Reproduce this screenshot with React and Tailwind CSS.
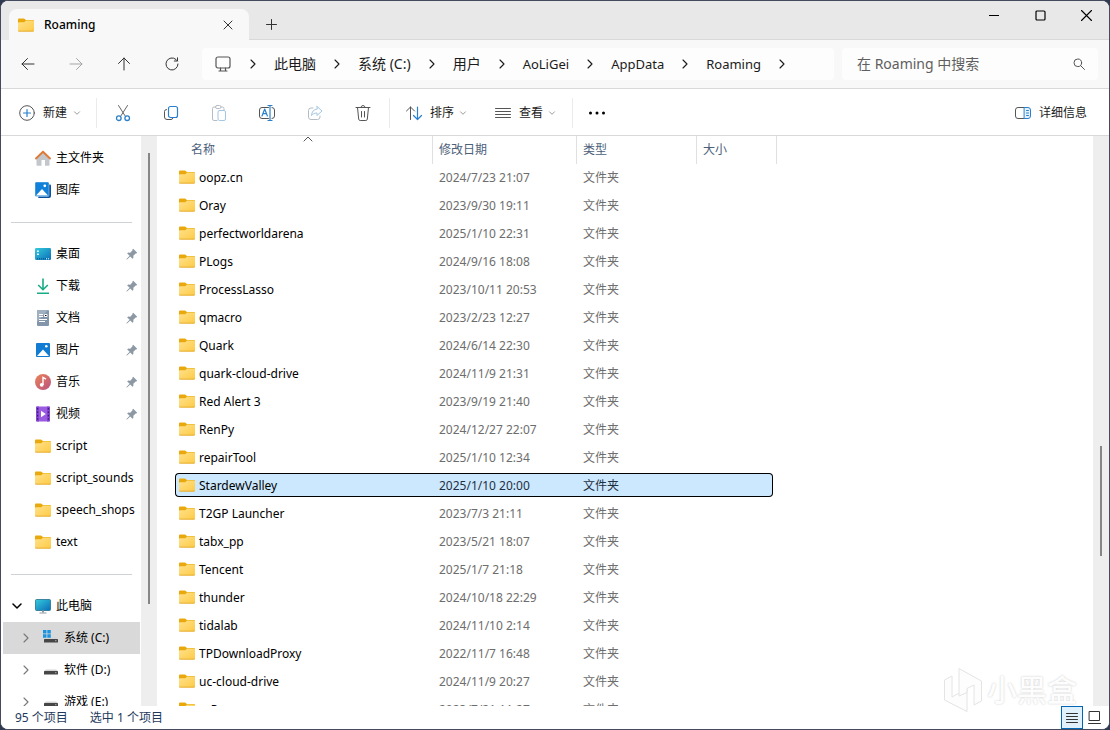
import { useState } from 'react'

const CRUMBS = [
  { label: '此电脑' },
  { label: '系统 (C:)' },
  { label: '用户' },
  { label: 'AoLiGei', latin: true },
  { label: 'AppData', latin: true },
  { label: 'Roaming', latin: true },
]

const FILES = [
  ['oopz.cn', '2024/7/23 21:07'],
  ['Oray', '2023/9/30 19:11'],
  ['perfectworldarena', '2025/1/10 22:31'],
  ['PLogs', '2024/9/16 18:08'],
  ['ProcessLasso', '2023/10/11 20:53'],
  ['qmacro', '2023/2/23 12:27'],
  ['Quark', '2024/6/14 22:30'],
  ['quark-cloud-drive', '2024/11/9 21:31'],
  ['Red Alert 3', '2023/9/19 21:40'],
  ['RenPy', '2024/12/27 22:07'],
  ['repairTool', '2025/1/10 12:34'],
  ['StardewValley', '2025/1/10 20:00'],
  ['T2GP Launcher', '2023/7/3 21:11'],
  ['tabx_pp', '2023/5/21 18:07'],
  ['Tencent', '2025/1/7 21:18'],
  ['thunder', '2024/10/18 22:29'],
  ['tidalab', '2024/11/10 2:14'],
  ['TPDownloadProxy', '2022/11/7 16:48'],
  ['uc-cloud-drive', '2024/11/9 20:27'],
  ['vsP', '2023/7/21 11:27'],
]

const PINNED = [
  { label: '桌面', icon: DesktopIcon },
  { label: '下载', icon: DownloadIcon },
  { label: '文档', icon: DocumentIcon },
  { label: '图片', icon: PicturesIcon },
  { label: '音乐', icon: MusicIcon },
  { label: '视频', icon: VideoIcon },
]

const FOLDERS = ['script', 'script_sounds', 'speech_shops', 'text']

const DRIVES = [
  { label: '系统 (C:)', system: true, active: true },
  { label: '软件 (D:)' },
  { label: '游戏 (E:)' },
]

// line icons

function Line({ size = 16, color = 'currentColor', width = 1, className = '', children }) {
  return (
    <svg
      width={size}
      height={size}
      viewBox={`0 0 ${size} ${size}`}
      fill="none"
      stroke={color}
      strokeWidth={width}
      strokeLinecap="round"
      strokeLinejoin="round"
      className={`shrink-0 ${className}`}
      aria-hidden="true"
    >
      {children}
    </svg>
  )
}

function ChevronRight({ className }) {
  return (
    <Line size={10} width={1.1} className={className}>
      <path d="M3 1l4 4-4 4" />
    </Line>
  )
}

function ChevronDown() {
  return (
    <Line size={8} color="#9a9a9a">
      <path d="M1.5 2.8L4 5.3l2.5-2.5" />
    </Line>
  )
}

function CutIcon() {
  return (
    <Line size={18}>
      <path d="M4.5 1.5l7 11M13.5 1.5l-7 11" stroke="#666" />
      <circle cx="4.8" cy="14.2" r="2.3" stroke="#2a80cc" strokeWidth="1.3" />
      <circle cx="13.2" cy="14.2" r="2.3" stroke="#2a80cc" strokeWidth="1.3" />
    </Line>
  )
}

function CopyIcon() {
  return (
    <Line>
      <path d="M3.5 4.5A2 2 0 0 0 1.500 6.500V12A2.500 2.500 0 0 0 4 14.500h4a2 2 0 0 0 2-1.500" stroke="#555" />
      <rect x="5.500" y="1.500" width="9" height="11" rx="2" stroke="#2a80cc" strokeWidth="1.200" />
    </Line>
  )
}

function PasteIcon() {
  return (
    <Line size={18}>
      <path d="M5.500 3H4a1.500 1.500 0 0 0-1.500 1.500v10.500A1.500 1.500 0 0 0 4 16.500h3M11 3h1.500A1.500 1.500 0 0 1 14 4.500V6" stroke="#b5bcc4" />
      <rect x="5.500" y="1.500" width="5.500" height="3" rx="1.500" stroke="#b5bcc4" />
      <rect x="8" y="6.500" width="7.500" height="10" rx="1.500" stroke="#a3c6e3" />
    </Line>
  )
}

function RenameIcon() {
  return (
    <Line size={18}>
      <path d="M10.500 3.500H4A2.500 2.500 0 0 0 1.500 6v6A2.500 2.500 0 0 0 4 14.500h6.500M14 3.500A2.500 2.500 0 0 1 16.500 6v6a2.500 2.500 0 0 1-2.500 2.500" stroke="#555" />
      <path d="M10 1.500h4M12 1.500v15M10 16.500h4M4 12l2.700-7 2.700 7M5 9.700h3.400" stroke="#2a80cc" strokeWidth="1.200" />
    </Line>
  )
}

function ShareIcon() {
  return (
    <Line>
      <path d="M6 3H4a2.500 2.500 0 0 0-2.500 2.500v6.500A2.500 2.500 0 0 0 4 14.500h6.500A2.500 2.500 0 0 0 13 12v-1" stroke="#b5bcc4" />
      <path d="M10 1.500l5 4.500-5 4.500V8c-2.500 0-4.300.8-5.500 2.600C4.800 6.800 6.600 4.300 10 4z" stroke="#a3c6e3" />
    </Line>
  )
}

function TrashIcon() {
  return (
    <Line size={18} color="#555">
      <path d="M2 3.500h14M7 3.500a2 2 0 0 1 4 0M3.500 3.500l1.200 11.700A1.500 1.500 0 0 0 6.200 16.500h5.600a1.500 1.500 0 0 0 1.500-1.300L14.500 3.500M7.500 7.500v5.500M10.500 7.500v5.500" />
    </Line>
  )
}

function SortIcon() {
  return (
    <Line size={18}>
      <path d="M5.500 15.500V3M1.500 7l4-4 4 4" stroke="#555" />
      <path d="M12.500 3v12.500M8.500 11.500l4 4 4-4" stroke="#2a80cc" strokeWidth="1.200" />
    </Line>
  )
}

function LinesIcon() {
  return (
    <Line color="#555">
      <path d="M.5 3.500h15M.5 6.500h15M.5 9.500h15M.5 12.500h15" />
    </Line>
  )
}

function DetailsPaneIcon() {
  return (
    <Line>
      <path d="M9.500 2.500H3A2.500 2.500 0 0 0 .5 5v6A2.500 2.500 0 0 0 3 13.500h6.500" stroke="#555" />
      <path d="M9.500 2.500H13A2.500 2.500 0 0 1 15.500 5v6a2.500 2.500 0 0 1-2.500 2.500H9.500z" fill="#e3f2fc" stroke="#2a80cc" />
      <path d="M11.500 5.500h2M11.500 8h2M11.500 10.500h2" stroke="#2a80cc" />
    </Line>
  )
}

// coloured icons

function FolderIcon() {
  return (
    <svg width="16" height="14" viewBox="0 0 16 14" className="shrink-0" aria-hidden="true">
      <defs>
        <linearGradient id="folder" x1="0" y1="0" x2="1" y2="1">
          <stop offset="0" stopColor="#ffe28c" />
          <stop offset="1" stopColor="#fdca45" />
        </linearGradient>
      </defs>
      <path d="M0 1.500A1 1 0 0 1 1 .5h5l2 1.500h7a1 1 0 0 1 1 1V6H0z" fill="#e9a90c" />
      <path d="M0 5.200a1 1 0 0 1 1-1h5.300L8 2.500h7.200a.8.800 0 0 1 .8.800v9.300a1 1 0 0 1-1 1H1a1 1 0 0 1-1-1z" fill="url(#folder)" />
      <path d="M0 12.200v.4a1 1 0 0 0 1 1h14a1 1 0 0 0 1-1v-.4a1 1 0 0 1-1 .6H1a1 1 0 0 1-1-.6z" fill="#dd9f1c" />
    </svg>
  )
}

function HomeIcon() {
  return (
    <svg width="16" height="16" viewBox="0 0 16 16" aria-hidden="true">
      <path d="M1.500 7.500L8 2l6.500 5.500V15a.8.800 0 0 1-.8.800H10V10H6.500v5.800H2.300a.8.800 0 0 1-.8-.8z" fill="#c3c6ca" />
      <path d="M1 8.500l7-6.800 7 6.800" fill="none" stroke="#df7a36" strokeWidth="1.900" strokeLinecap="round" strokeLinejoin="round" />
    </svg>
  )
}

function GalleryIcon() {
  return (
    <svg width="16" height="16" viewBox="0 0 16 16" aria-hidden="true">
      <path d="M14 2.500h1a1 1 0 0 1 1 1V14a2 2 0 0 1-2 2H4a1 1 0 0 1-1-1z" fill="#0b4f9e" />
      <rect width="14" height="14.500" rx="1.200" fill="#1180d8" stroke="#fff" strokeWidth=".4" />
      <path d="M1 13.500l6-6.500 6 6.500z" fill="#fff" />
      <circle cx="9.800" cy="3.800" r="1.400" fill="#fff" />
    </svg>
  )
}

function DesktopIcon() {
  return (
    <svg width="16" height="12" viewBox="0 0 16 12" aria-hidden="true">
      <defs>
        <linearGradient id="desk" x1="0" y1="0" x2="1" y2="1">
          <stop offset="0" stopColor="#35cbdc" />
          <stop offset="1" stopColor="#0a6db8" />
        </linearGradient>
      </defs>
      <rect width="16" height="12" rx="1.200" fill="url(#desk)" />
      <path d="M2 2.500h1.800v1.500H2zM2 5.500h1.800v1.500H2z" fill="#fff" />
      <path d="M2 10.800h9" stroke="#064a7c" strokeDasharray="1 1" />
      <path d="M11 10.800h4" stroke="#fff" strokeDasharray="1 1" />
    </svg>
  )
}

function DownloadIcon() {
  return (
    <svg width="16" height="16" viewBox="0 0 16 16" fill="none" stroke="#19ab85" strokeWidth="1.600" aria-hidden="true">
      <path d="M8 .5v11M3.200 7L8 11.700 12.800 7M2 15.200h12" />
    </svg>
  )
}

function DocumentIcon() {
  return (
    <svg width="16" height="16" viewBox="0 0 16 16" aria-hidden="true">
      <rect x="2" width="12" height="16" rx="1" fill="#8295aa" />
      <path d="M2 1a1 1 0 0 1 1-1h10L2 12z" fill="#9fb0c0" />
      <path d="M4 4.500h4M4 6.500h4M4 9.500h8M4 11.500h6M9.500 4.500H12v2H9.500z" stroke="#fff" />
    </svg>
  )
}

function PicturesIcon() {
  return (
    <svg width="16" height="16" viewBox="0 0 16 16" aria-hidden="true">
      <rect x="1" y="1" width="14" height="14" rx="1" fill="#127cd2" />
      <path d="M2 14l6-6.500 6 6.500z" fill="#fff" />
      <circle cx="11.300" cy="4.300" r="1.300" fill="#fff" />
    </svg>
  )
}

function MusicIcon() {
  return (
    <svg width="16" height="16" viewBox="0 0 16 16" aria-hidden="true">
      <defs>
        <linearGradient id="music" x1="0" y1="0" x2="1" y2="1">
          <stop offset="0" stopColor="#eb8458" />
          <stop offset="1" stopColor="#b95080" />
        </linearGradient>
      </defs>
      <circle cx="8" cy="8" r="8" fill="url(#music)" />
      <circle cx="6.700" cy="10.800" r="1.900" fill="#fff" />
      <path d="M8 11V3.500l3 1.700" fill="none" stroke="#fff" strokeWidth="1.400" />
    </svg>
  )
}

function VideoIcon() {
  return (
    <svg width="16" height="16" viewBox="0 0 16 16" aria-hidden="true">
      <rect x="1" y=".5" width="14" height="15" rx="1" fill="#9a5be0" />
      <path d="M1 1.500a1 1 0 0 1 1-1h2v15H2a1 1 0 0 1-1-1zM12 .5h2a1 1 0 0 1 1 1v13a1 1 0 0 1-1 1h-2z" fill="#8246cc" />
      <path d="M2.600 2v12M13.400 2v12" stroke="#3e1677" strokeWidth="1.200" strokeDasharray="1.600 1.800" />
      <path d="M6 4.800v6.400L10.800 8z" fill="#fff" />
    </svg>
  )
}

function ComputerIcon() {
  return (
    <svg width="16" height="16" viewBox="0 0 16 16" aria-hidden="true">
      <rect x=".5" y="1.500" width="15" height="11" rx="1" fill="url(#desk)" stroke="#24708f" strokeWidth=".8" />
      <path d="M7 12.500h2v2H7z" fill="#8f9aa3" />
      <path d="M4.500 15h7" stroke="#8f9aa3" />
    </svg>
  )
}

function DriveIcon({ system }) {
  return (
    <svg width="16" height="16" viewBox="0 0 16 16" aria-hidden="true">
      <path d="M3 7.500h10L15 9H1z" fill="#d3d5d7" />
      <rect x="1" y="9" width="14" height="3.500" rx=".6" fill="#464646" />
      <path d="M12 10.700h1.500" stroke="#b8c6b8" strokeWidth=".8" />
      {system && (
        <>
          <path d="M0 0h8v8H0z" fill="#d9d9d9" />
          <path d="M0 0h3.500v3.500H0zM4.300 0h3.500v3.500H4.300zM0 4.300h3.500v3.500H0zM4.300 4.300h3.500v3.500H4.300z" fill="#1b94e0" />
        </>
      )}
    </svg>
  )
}

function PinIcon() {
  return (
    <svg width="12" height="12" viewBox="0 0 12 12" fill="#8c98a4" className="shrink-0" aria-hidden="true">
      <path d="M7.200.8l4 4-.9.8-.6-.2-2.400 2.400.1 2.100-.9.9L4.200 8.400 1 11.500l-.6.1.1-.6 3.100-3.200L1.200 5.500l.9-.9 2.100.1 2.400-2.400-.2-.7z" />
    </svg>
  )
}

function WatermarkLogo() {
  return (
    <svg width="40" height="46" viewBox="0 0 40 46" fill="#fdfdfd" stroke="#e4e4e4" strokeLinejoin="round" aria-hidden="true">
      <path d="M1.500 13L9 9v21l9-5v-5l6-3v27.500L1.500 33z" />
      <path d="M16 1.500L38.500 14v20L31 38V18l-7 3.500v4l-8 3.500z" />
    </svg>
  )
}

// layout parts

function TitleBar() {
  return (
    <header className="flex h-[39px] shrink-0 bg-[#e8e8e8] pl-2">
      <div className="mt-2 flex w-60 items-center rounded-t-lg bg-[#f8f8f8] pl-[9px] pr-[9px]">
        <FolderIcon />
        <span className="ml-2.5 flex-1 text-xs font-medium text-black">Roaming</span>
        <button type="button" aria-label="关闭标签页" className="flex h-6 w-6 items-center justify-center">
          <Line size={10} color="#333">
            <path d="M1 1l8 8M9 1L1 9" />
          </Line>
        </button>
      </div>
      <button type="button" aria-label="新标签页" className="mt-2 flex w-11 items-center justify-center border-b border-[#d9d9d9]">
        <Line size={11} color="#333">
          <path d="M5.500 .5v10M.5 5.500h10" />
        </Line>
      </button>
      <div className="flex flex-1 items-start justify-end border-b border-[#d9d9d9] text-black">
        <button type="button" aria-label="最小化" className="flex h-7 w-[46px] items-center justify-center">
          <Line size={10}>
            <path d="M0 5.500h10" />
          </Line>
        </button>
        <button type="button" aria-label="最大化" className="flex h-7 w-[46px] items-center justify-center">
          <Line size={11} width={1.2}>
            <rect x="1" y="1" width="9" height="9" rx="1" />
          </Line>
        </button>
        <button type="button" aria-label="关闭" className="flex h-7 w-[46px] items-center justify-center">
          <Line size={11} width={1.1}>
            <path d="M.5 .5l10 10M10.500 .5l-10 10" />
          </Line>
        </button>
      </div>
    </header>
  )
}

function NavButton({ label, disabled, children }) {
  return (
    <button type="button" aria-label={label} disabled={disabled} className="flex w-12 items-center justify-center text-[#333] disabled:text-[#a5a5a5]">
      <Line size={14}>{children}</Line>
    </button>
  )
}

function AddressRow() {
  return (
    <div className="flex h-[49px] shrink-0 items-center border-b border-[#d9d9d9] bg-[#f8f8f8] pl-[3px] pr-[11px]">
      <div className="flex h-8 shrink-0">
        <NavButton label="后退">
          <path d="M13 7H1M6.500 1.500L1 7l5.500 5.500" />
        </NavButton>
        <NavButton label="前进" disabled>
          <path d="M1 7h12M7.500 1.500L13 7l-5.500 5.500" />
        </NavButton>
        <NavButton label="向上">
          <path d="M7 13V1M1.500 6.500L7 1l5.500 5.500" />
        </NavButton>
        <NavButton label="刷新">
          <path d="M13 7a6 6 0 1 1-2-4.500L12.500 4M12.500 .8V4H9.300" />
        </NavButton>
      </div>
      <nav aria-label="路径" className="ml-1.5 flex h-8 min-w-0 flex-1 items-center rounded bg-[#fdfdfd] pl-3 text-sm text-[#1b1b1b]">
        <Line size={18} color="#555" width={1.2}>
          <rect x="2" y="2" width="14" height="11" rx="2" />
          <path d="M6.500 13v2.500M11.500 13v2.500M5 16h8" />
        </Line>
        <ChevronRight className="mx-4" />
        {CRUMBS.map((crumb) => (
          <span key={crumb.label} className="flex shrink-0 items-center">
            <a href="#" className={`whitespace-nowrap ${crumb.latin ? 'text-[13px]' : ''}`}>{crumb.label}</a>
            <ChevronRight className="mx-4" />
          </span>
        ))}
      </nav>
      <div className="ml-2 flex h-8 w-64 shrink-0 items-center rounded bg-[#fdfdfd] pl-[15px] pr-[13px]">
        <input
          type="search"
          aria-label="在 Roaming 中搜索"
          placeholder="在 Roaming 中搜索"
          className="min-w-0 flex-1 bg-transparent text-sm outline-none placeholder:text-[#5f5f5f]"
        />
        <Line size={12} color="#555">
          <circle cx="4.800" cy="4.800" r="3.800" />
          <path d="M7.700 7.700l3.800 3.800" />
        </Line>
      </div>
    </div>
  )
}

function ToolButton({ label, disabled, children }) {
  return (
    <button type="button" aria-label={label} disabled={disabled} className="flex h-8 w-12 items-center justify-center">
      {children}
    </button>
  )
}

function Divider() {
  return <span className="h-[30px] w-px bg-[#ebebeb]" />
}

function Toolbar() {
  return (
    <div className="flex h-[47px] shrink-0 items-center border-b border-[#d9d9d9] bg-white pr-[22px] pt-0.5 text-xs text-[#1b1b1b]">
      <button type="button" className="flex h-8 items-center pl-[18px] pr-[15px]">
        <Line size={16}>
          <circle cx="8" cy="8" r="7.300" stroke="#555" />
          <path d="M8 4.500v7M4.500 8h7" stroke="#2a80cc" strokeWidth="1.200" />
        </Line>
        <span className="ml-2 mr-1.5">新建</span>
        <ChevronDown />
      </button>
      <Divider />
      <span className="w-0.5" />
      <ToolButton label="剪切"><CutIcon /></ToolButton>
      <ToolButton label="复制"><CopyIcon /></ToolButton>
      <ToolButton label="粘贴" disabled><PasteIcon /></ToolButton>
      <ToolButton label="重命名"><RenameIcon /></ToolButton>
      <ToolButton label="共享" disabled><ShareIcon /></ToolButton>
      <ToolButton label="删除"><TrashIcon /></ToolButton>
      <span className="w-0.5" />
      <Divider />
      <button type="button" className="flex h-8 items-center pl-[15px] pr-[15px]">
        <SortIcon />
        <span className="ml-[7px] mr-[5px]">排序</span>
        <ChevronDown />
      </button>
      <button type="button" className="flex h-8 items-center pl-[13px] pr-4">
        <LinesIcon />
        <span className="ml-2 mr-[5px]">查看</span>
        <ChevronDown />
      </button>
      <Divider />
      <ToolButton label="更多">
        <svg width="18" height="4" viewBox="0 0 18 4" aria-hidden="true">
          <circle cx="2.500" cy="2" r="1.500" />
          <circle cx="9" cy="2" r="1.500" />
          <circle cx="15.500" cy="2" r="1.500" />
        </svg>
      </ToolButton>
      <button type="button" className="ml-auto flex h-8 items-center gap-2">
        <DetailsPaneIcon />
        详细信息
      </button>
    </div>
  )
}

function SideLink({ icon, label, pinned }) {
  return (
    <a href="#" className="flex h-8 items-center pl-[34px] pr-[3px]">
      <span className="flex w-4 shrink-0 justify-center">{icon}</span>
      <span className="ml-[5px] flex-1 whitespace-nowrap">{label}</span>
      {pinned && <PinIcon />}
    </a>
  )
}

function SideRule() {
  return (
    <div className="flex h-8 items-center pl-2.5 pr-[9px]">
      <hr className="w-full border-[#cfd2d4]" />
    </div>
  )
}

function Sidebar() {
  return (
    <aside className="flex w-[156px] shrink-0">
      <nav aria-label="导航窗格" className="min-w-0 flex-1 overflow-hidden pt-1.5 text-xs text-black">
        <SideLink icon={<HomeIcon />} label="主文件夹" />
        <SideLink icon={<GalleryIcon />} label="图库" />
        <SideRule />
        {PINNED.map(({ label, icon: Icon }) => (
          <SideLink key={label} icon={<Icon />} label={label} pinned />
        ))}
        {FOLDERS.map((name) => (
          <SideLink key={name} icon={<FolderIcon />} label={name} />
        ))}
        <SideRule />
        <a href="#" className="flex h-8 items-center pl-[11px]">
          <Line size={10} width={1.5}>
            <path d="M1 3l4 4 4-4" />
          </Line>
          <span className="ml-[13px]"><ComputerIcon /></span>
          <span className="ml-[5px]">此电脑</span>
        </a>
        {DRIVES.map((drive) => (
          <a
            key={drive.label}
            href="#"
            className={`ml-0.5 mr-px flex h-8 items-center pl-[18px] ${drive.active ? 'bg-[#d9d9d9]' : ''}`}
          >
            <ChevronRight className="text-[#777]" />
            <span className="ml-3"><DriveIcon system={drive.system} /></span>
            <span className="ml-[5px]">{drive.label}</span>
          </a>
        ))}
      </nav>
      <div className="flex w-4 justify-center bg-[#eeeeee] pt-[17px]">
        <span className="h-[451px] w-0.5 bg-[#868686]" />
      </div>
    </aside>
  )
}

function HeaderCell({ children, className = 'pl-1.5' }) {
  return <th scope="col" className={`relative h-7 border-r border-[#e0e0e0] p-0 text-left font-normal ${className}`}>{children}</th>
}

function FileTable() {
  const [selected, setSelected] = useState('StardewValley')

  return (
    <table className="w-[602px] table-fixed border-separate border-spacing-0 text-xs">
      <colgroup>
        <col className="w-[258px]" />
        <col className="w-36" />
        <col className="w-[120px]" />
        <col className="w-20" />
      </colgroup>
      <thead className="text-[#4c607a]">
        <tr>
          <HeaderCell className="pl-4">
            名称
            <Line size={10} color="#555" className="absolute left-32 top-0">
              <path d="M1 5l4-4 4 4" />
            </Line>
          </HeaderCell>
          <HeaderCell>修改日期</HeaderCell>
          <HeaderCell>类型</HeaderCell>
          <HeaderCell>大小</HeaderCell>
        </tr>
      </thead>
      <tbody>
        {FILES.map(([name, date]) => {
          const active = name === selected
          const box = active ? 'border-black bg-[#cce8ff] text-[#1f2f3f]' : 'border-transparent text-[#6d6d6d]'
          return (
            <tr key={name} onClick={() => setSelected(name)}>
              <td className="h-7 p-0 pt-px align-top">
                <div className={`flex h-6 items-center gap-1 rounded-l-sm border-y border-l pl-[3px] ${box}`}>
                  <FolderIcon />
                  <span className="pt-0.5 text-black">{name}</span>
                </div>
              </td>
              <td className="p-0 pt-px align-top">
                <div className={`flex h-6 items-center border-y pl-1.5 pt-0.5 ${box}`}>{date}</div>
              </td>
              <td className="p-0 pt-px align-top">
                <div className={`flex h-6 items-center border-y pl-1.5 pt-0.5 ${box}`}>文件夹</div>
              </td>
              <td className="p-0 pt-px pr-1 align-top">
                <div className={`h-6 rounded-r-sm border-y border-r ${box}`} />
              </td>
            </tr>
          )
        })}
      </tbody>
    </table>
  )
}

function StatusBar() {
  return (
    <footer className="flex h-[23px] shrink-0 items-center bg-white pl-3.5 pr-2 text-xs text-[#1e395b]">
      <span>95 个项目</span>
      <span className="ml-[22px]">选中 1 个项目</span>
      <button type="button" aria-label="详细信息视图" className="ml-auto flex h-[23px] w-[22px] items-center justify-center border border-[#0067b8] bg-[#e0f1fc]">
        <Line size={12} color="#333">
          <path d="M.5 1.500h11M.5 4.500h11M.5 7.500h11M.5 10.500h11" />
        </Line>
      </button>
      <button type="button" aria-label="大图标视图" className="ml-1 flex h-[23px] w-3.5 items-center justify-center">
        <Line size={13} color="#333">
          <path d="M1.500 .5h10v9h-10zM.5 12.500h12" />
        </Line>
      </button>
    </footer>
  )
}

export default function App() {
  return (
    <div className="h-screen bg-[#2f3950] font-['Noto_Sans','Noto_Sans_CJK_SC',sans-serif] text-[#1b1b1b]">
      <div className="relative flex h-full flex-col overflow-hidden rounded-lg border border-[#454a5c] bg-white">
        <TitleBar />
        <AddressRow />
        <Toolbar />
        <div className="flex min-h-0 flex-1">
          <Sidebar />
          <main className="min-w-0 flex-1 overflow-hidden pl-[18px]">
            <FileTable />
          </main>
          <div className="flex w-4 shrink-0 justify-center bg-[#eeeeee] pt-[310px]">
            <span className="h-[110px] w-0.5 bg-[#868686]" />
          </div>
        </div>
        <StatusBar />
        <div className="pointer-events-none absolute bottom-4 right-8 flex items-center gap-1">
          <WatermarkLogo />
          <span className="text-3xl font-medium text-[#fdfdfd] [text-shadow:0_0_2px_#c8c8c8]">小黑盒</span>
        </div>
      </div>
    </div>
  )
}
